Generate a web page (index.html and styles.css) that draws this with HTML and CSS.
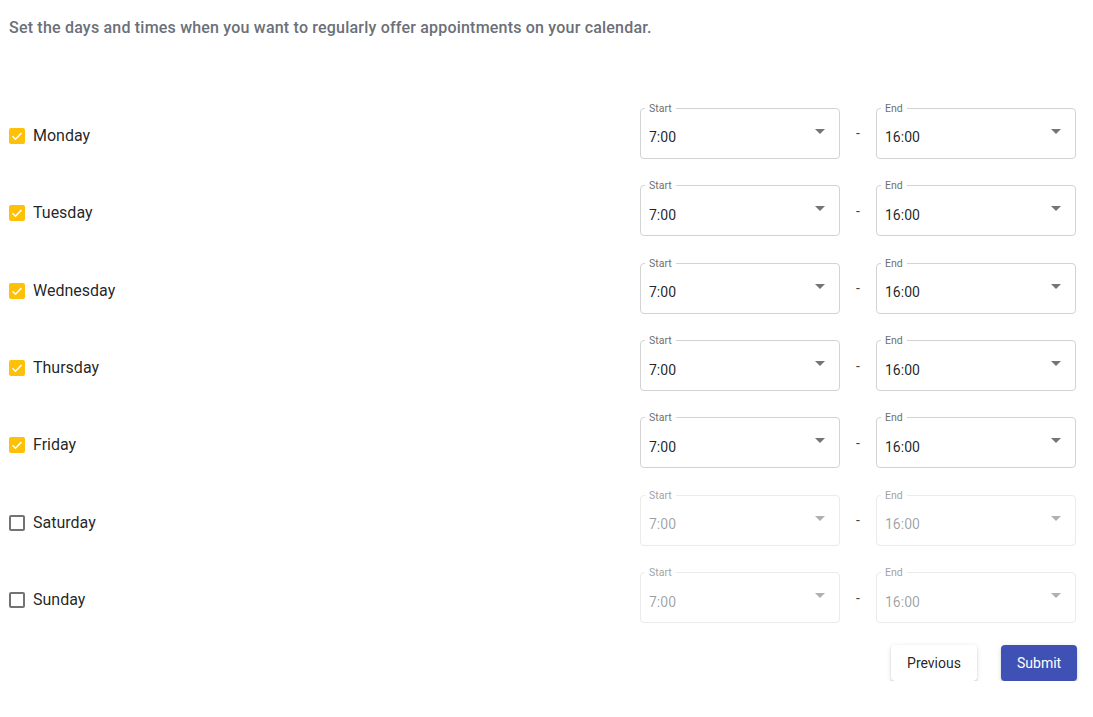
FILE: index.html
```html
<!DOCTYPE html>
<html lang="en">
<head>
<meta charset="utf-8">
<title>Availability</title>
<link rel="stylesheet" href="styles.css">
</head>
<body>
<div class="page">
  <p class="intro">Set the days and times when you want to regularly offer appointments on your calendar.</p>

  <div class="rows">
    <div class="row">
      <label class="day"><span class="cb checked"><svg viewBox="0 0 16 16"><path d="M3.5 8.2l3 3 6-6.2" /></svg></span><span>Monday</span></label>
      <div class="times">
        <div class="field"><span class="flabel">Start</span><span class="value">7:00</span><span class="arrow"></span></div>
        <span class="dash">-</span>
        <div class="field"><span class="flabel">End</span><span class="value">16:00</span><span class="arrow"></span></div>
      </div>
    </div>
    <div class="row">
      <label class="day"><span class="cb checked"><svg viewBox="0 0 16 16"><path d="M3.5 8.2l3 3 6-6.2" /></svg></span><span>Tuesday</span></label>
      <div class="times">
        <div class="field"><span class="flabel">Start</span><span class="value">7:00</span><span class="arrow"></span></div>
        <span class="dash">-</span>
        <div class="field"><span class="flabel">End</span><span class="value">16:00</span><span class="arrow"></span></div>
      </div>
    </div>
    <div class="row">
      <label class="day"><span class="cb checked"><svg viewBox="0 0 16 16"><path d="M3.5 8.2l3 3 6-6.2" /></svg></span><span>Wednesday</span></label>
      <div class="times">
        <div class="field"><span class="flabel">Start</span><span class="value">7:00</span><span class="arrow"></span></div>
        <span class="dash">-</span>
        <div class="field"><span class="flabel">End</span><span class="value">16:00</span><span class="arrow"></span></div>
      </div>
    </div>
    <div class="row">
      <label class="day"><span class="cb checked"><svg viewBox="0 0 16 16"><path d="M3.5 8.2l3 3 6-6.2" /></svg></span><span>Thursday</span></label>
      <div class="times">
        <div class="field"><span class="flabel">Start</span><span class="value">7:00</span><span class="arrow"></span></div>
        <span class="dash">-</span>
        <div class="field"><span class="flabel">End</span><span class="value">16:00</span><span class="arrow"></span></div>
      </div>
    </div>
    <div class="row">
      <label class="day"><span class="cb checked"><svg viewBox="0 0 16 16"><path d="M3.5 8.2l3 3 6-6.2" /></svg></span><span>Friday</span></label>
      <div class="times">
        <div class="field"><span class="flabel">Start</span><span class="value">7:00</span><span class="arrow"></span></div>
        <span class="dash">-</span>
        <div class="field"><span class="flabel">End</span><span class="value">16:00</span><span class="arrow"></span></div>
      </div>
    </div>
    <div class="row">
      <label class="day"><span class="cb"></span><span>Saturday</span></label>
      <div class="times disabled">
        <div class="field"><span class="flabel">Start</span><span class="value">7:00</span><span class="arrow"></span></div>
        <span class="dash">-</span>
        <div class="field"><span class="flabel">End</span><span class="value">16:00</span><span class="arrow"></span></div>
      </div>
    </div>
    <div class="row">
      <label class="day"><span class="cb"></span><span>Sunday</span></label>
      <div class="times disabled">
        <div class="field"><span class="flabel">Start</span><span class="value">7:00</span><span class="arrow"></span></div>
        <span class="dash">-</span>
        <div class="field"><span class="flabel">End</span><span class="value">16:00</span><span class="arrow"></span></div>
      </div>
    </div>
  </div>

  <div class="actions">
    <button class="btn btn-prev" type="button">Previous</button>
    <button class="btn btn-submit" type="button">Submit</button>
  </div>
</div>
</body>
</html>
```

FILE: styles.css
```css
* { box-sizing: border-box; }

body {
  margin: 0;
  background: #fff;
  font-family: Roboto, "Liberation Sans", Arial, sans-serif;
  color: rgba(0, 0, 0, 0.87);
}

.page {
  padding: 0 17px 0 9px;
}

.intro {
  margin: 18px 0 0;
  font-size: 16px;
  line-height: 20px;
  font-weight: 500;
  letter-spacing: 0.2px;
  color: #6b7079;
}

.rows {
  margin-top: 59px;
  padding-top: 0.3px;
}

.row {
  height: 77.35px;
  display: flex;
  align-items: center;
}

.day {
  display: flex;
  align-items: center;
  gap: 8px;
  font-size: 16px;
  line-height: 20px;
}

.cb {
  width: 16px;
  height: 16px;
  border: 2px solid #737373;
  border-radius: 2px;
  display: flex;
  align-items: center;
  justify-content: center;
}

.cb.checked {
  border: none;
  background: #ffc107;
}

.cb svg {
  width: 16px;
  height: 16px;
  fill: none;
  stroke: #fff;
  stroke-width: 1.6;
}

.times {
  margin-left: auto;
  display: flex;
  align-items: center;
  margin-bottom: 5px;
}

.field {
  position: relative;
  width: 200px;
  height: 51px;
  border: 1px solid #d3d3d3;
  border-radius: 4px;
  display: flex;
  align-items: center;
  padding: 8px 14px 0 8px;
}

.flabel {
  position: absolute;
  left: 4px;
  top: -5px;
  padding: 0 4px;
  background: #fff;
  font-size: 10.5px;
  line-height: 10px;
  color: #6f6f6f;
}

.value {
  font-size: 14px;
  color: rgba(0, 0, 0, 0.87);
  flex: 1;
}

.arrow {
  width: 0;
  height: 0;
  border-left: 5px solid transparent;
  border-right: 5px solid transparent;
  border-top: 5px solid #757575;
  margin-top: -12px;
}

.dash {
  width: 36px;
  text-align: center;
  font-size: 14px;
  color: #444;
}

.disabled .field { border-color: #ebebeb; }
.disabled .flabel { color: #a3a3a3; }
.disabled .value { color: rgba(0, 0, 0, 0.38); }
.disabled .arrow { border-top-color: #b0b0b0; }

.actions {
  display: flex;
  justify-content: flex-end;
  gap: 24px;
  margin-top: 6px;
  margin-right: -1px;
}

.btn {
  height: 36px;
  border: none;
  border-radius: 4px;
  font-family: Roboto, "Liberation Sans", Arial, sans-serif;
  font-size: 14px;
  padding: 0 16px;
  box-shadow: 0 3px 1px -2px rgba(0,0,0,0.2), 0 2px 2px 0 rgba(0,0,0,0.14), 0 1px 5px 0 rgba(0,0,0,0.12);
  cursor: pointer;
}

.btn-prev {
  width: 86px;
  background: #fff;
  color: rgba(0, 0, 0, 0.87);
}

.btn-submit {
  width: 76px;
  background: #3f51b5;
  color: #fff;
}
```
